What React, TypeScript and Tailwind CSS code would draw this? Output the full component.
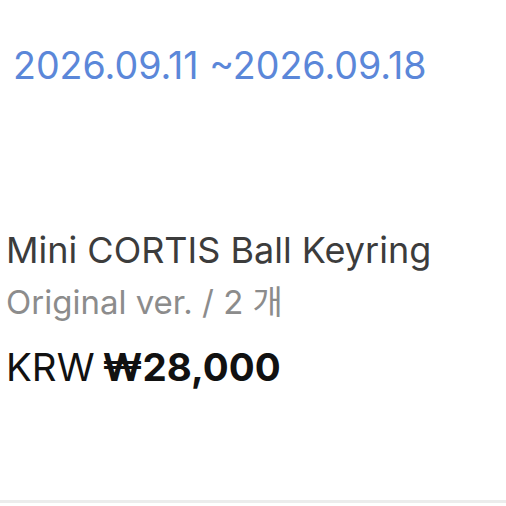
export default function App() {
  return (
    <div className="w-[506px] h-[506px] bg-white flex flex-col overflow-hidden" style={{ fontFamily: "Inter, 'Noto Sans CJK KR', sans-serif" }}>
      <div className="pt-[44px] pl-[13px] text-[37.6px] leading-[44px] text-[#5b87d9]">2026.09.11 ~2026.09.18</div>
      <div className="mt-[140px] pl-[6px] flex flex-col">
        <div className="text-[36px] leading-[44px] text-[#3c3c3c]">Mini CORTIS Ball Keyring</div>
        <div className="mt-[8px] text-[33px] leading-[44px] text-[#8c8c8c]">Original ver. / 2 개</div>
        <div className="mt-[21px] text-[38.5px] leading-[44px] text-[#111]">KRW<span className="ml-[8px] font-bold">₩28,000</span></div>
      </div>
      <div className="mt-auto mb-[3px] h-[3px] bg-[#ececec]" />
    </div>
  );
}
